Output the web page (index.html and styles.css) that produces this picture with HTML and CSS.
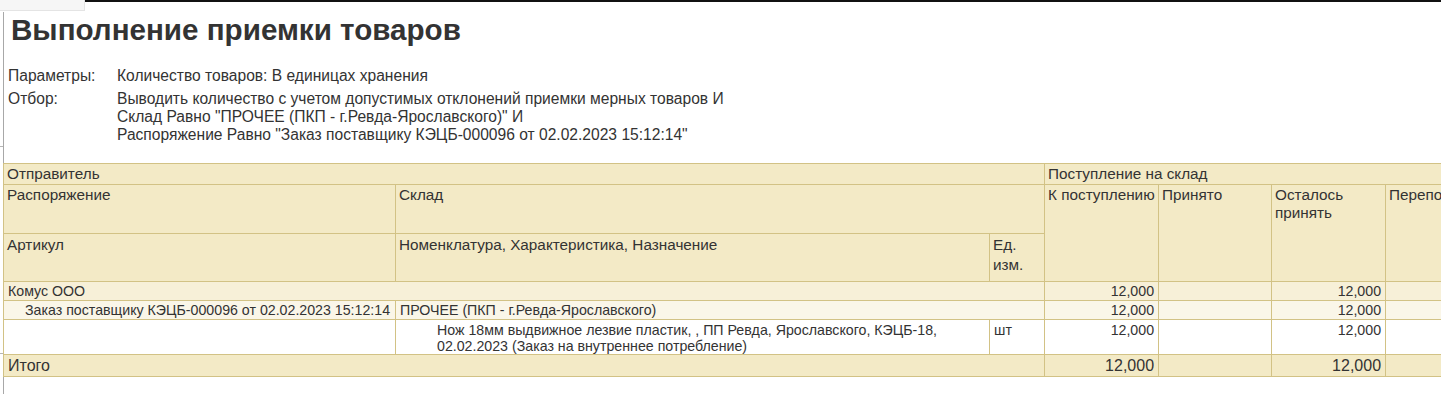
FILE: index.html
```html
<!DOCTYPE html>
<html lang="ru">
<head>
<meta charset="utf-8">
<title>Выполнение приемки товаров</title>
<link rel="stylesheet" href="styles.css">
</head>
<body>
<div class="topbar"><div class="corner"></div><div class="rule"></div></div>
<div class="frame">
  <div class="gutter"><div class="tick tick-a"></div><div class="tick tick-b"></div></div>
  <div class="sheet">
    <h1 class="title">Выполнение приемки товаров</h1>
    <div class="params">
      <div class="param">
        <div class="label">Параметры:</div>
        <div class="value">Количество товаров: В единицах хранения</div>
      </div>
      <div class="param">
        <div class="label">Отбор:</div>
        <div class="value">Выводить количество с учетом допустимых отклонений приемки мерных товаров И<br>Склад Равно "ПРОЧЕЕ (ПКП - г.Ревда-Ярославского)" И<br>Распоряжение Равно "Заказ поставщику КЭЦБ-000096 от 02.02.2023 15:12:14"</div>
      </div>
    </div>
    <table class="report">
      <colgroup>
        <col class="c-a"><col class="c-b"><col class="c-c"><col class="c-d"><col class="c-e"><col class="c-f"><col class="c-g">
      </colgroup>
      <thead>
        <tr class="h1">
          <th colspan="3">Отправитель</th>
          <th colspan="4">Поступление на склад</th>
        </tr>
        <tr class="h2">
          <th>Распоряжение</th>
          <th colspan="2">Склад</th>
          <th rowspan="2" class="nowrap">К поступлению</th>
          <th rowspan="2">Принято</th>
          <th rowspan="2">Осталось принять</th>
          <th rowspan="2" class="nowrap">Перепо</th>
        </tr>
        <tr class="h3">
          <th>Артикул</th>
          <th>Номенклатура, Характеристика, Назначение</th>
          <th>Ед. изм.</th>
        </tr>
      </thead>
      <tbody>
        <tr class="g1">
          <td colspan="3">Комус ООО</td>
          <td class="num">12,000</td><td></td><td class="num">12,000</td><td></td>
        </tr>
        <tr class="g2">
          <td class="ind1 nowrap">Заказ поставщику КЭЦБ-000096 от 02.02.2023 15:12:14</td>
          <td colspan="2">ПРОЧЕЕ (ПКП - г.Ревда-Ярославского)</td>
          <td class="num">12,000</td><td></td><td class="num">12,000</td><td></td>
        </tr>
        <tr class="g3">
          <td></td>
          <td class="ind2">Нож 18мм выдвижное лезвие пластик, , ПП Ревда, Ярославского, КЭЦБ-18, 02.02.2023 (Заказ на внутреннее потребление)</td>
          <td>шт</td>
          <td class="num">12,000</td><td></td><td class="num">12,000</td><td></td>
        </tr>
        <tr class="total">
          <td colspan="3">Итого</td>
          <td class="num">12,000</td><td></td><td class="num">12,000</td><td></td>
        </tr>
      </tbody>
    </table>
  </div>
</div>
</body>
</html>
```
FILE: styles.css
```css
html, body {
  margin: 0;
  padding: 0;
  overflow: hidden;
  background: #ffffff;
}
body {
  font-family: "Liberation Sans", Arial, sans-serif;
  color: #333333;
  width: 1441px;
  height: 394px;
}
.topbar {
  display: flex;
  height: 12px;
}
.corner {
  width: 84px;
  height: 10px;
  background: #f6f6f6;
  border-right: 1px solid #e4e4e4;
  border-bottom: 1px solid #e4e4e4;
}
.rule {
  flex: 1;
  border-top: 2px solid #111111;
  height: 0;
}
.frame {
  display: flex;
  height: 382px;
}
.gutter {
  width: 3px;
  display: flex;
  flex-direction: column;
}
.tick {
  height: 1px;
  background: #b5b5b5;
}
.tick-a { margin-top: 134px; }
.tick-b { margin-top: 206px; }
.sheet {
  flex: 1;
  border-left: 1px solid #a8a8a8;
  min-width: 0;
}
.title {
  margin: 1px 0 0 7px;
  font-size: 29.6px;
  line-height: 34px;
  font-weight: bold;
  color: #333333;
}
.params {
  margin: 20px 0 0 4px;
  display: flex;
  flex-direction: column;
  gap: 5px;
  font-size: 15.6px;
  line-height: 18px;
}
.param {
  display: flex;
}
.label {
  width: 109px;
  flex: none;
}
.report {
  margin: 19px 0 0 -1px;
  border-collapse: collapse;
  table-layout: fixed;
  width: 1502px;
  font-size: 14.2px;
  line-height: 16px;
}
.c-a { width: 392px; }
.c-b { width: 594px; }
.c-c { width: 55px; }
.c-d { width: 114px; }
.c-e { width: 113px; }
.c-f { width: 114px; }
.c-g { width: 120px; }
.report th,
.report td {
  border: 1px solid #d2c285;
  padding: 1px 4px 0 4px;
  vertical-align: top;
  text-align: left;
  font-weight: normal;
  overflow: hidden;
}
.report th {
  background: #f3eac6;
  font-size: 15.3px;
  line-height: 18px;
  padding-left: 3px;
  padding-right: 2px;
}
.report tr.h1 { height: 21px; }
.report tr.h2 { height: 49px; }
.report tr.h3 { height: 48px; }
.report tr.h3 th { line-height: 20px; }
.report tr.g1 { height: 19px; }
.report tr.g1 td { background: #f7f0d8; }
.report tr.g2 { height: 19px; }
.report tr.g2 td { background: #faf6e8; }
.report tr.g3 { height: 35px; }
.report tr.g3 td { background: #ffffff; padding-top: 2px; }
.report tr.total { height: 22px; }
.report tr.total td {
  background: #f3eac6;
  font-size: 16px;
  line-height: 18px;
  padding-top: 2px;
}
.report td.num { text-align: right; }
.report .ind1 { padding-left: 21px; padding-right: 1px; }
.report .ind2 { padding-left: 41px; }
.nowrap { white-space: nowrap; }
```
